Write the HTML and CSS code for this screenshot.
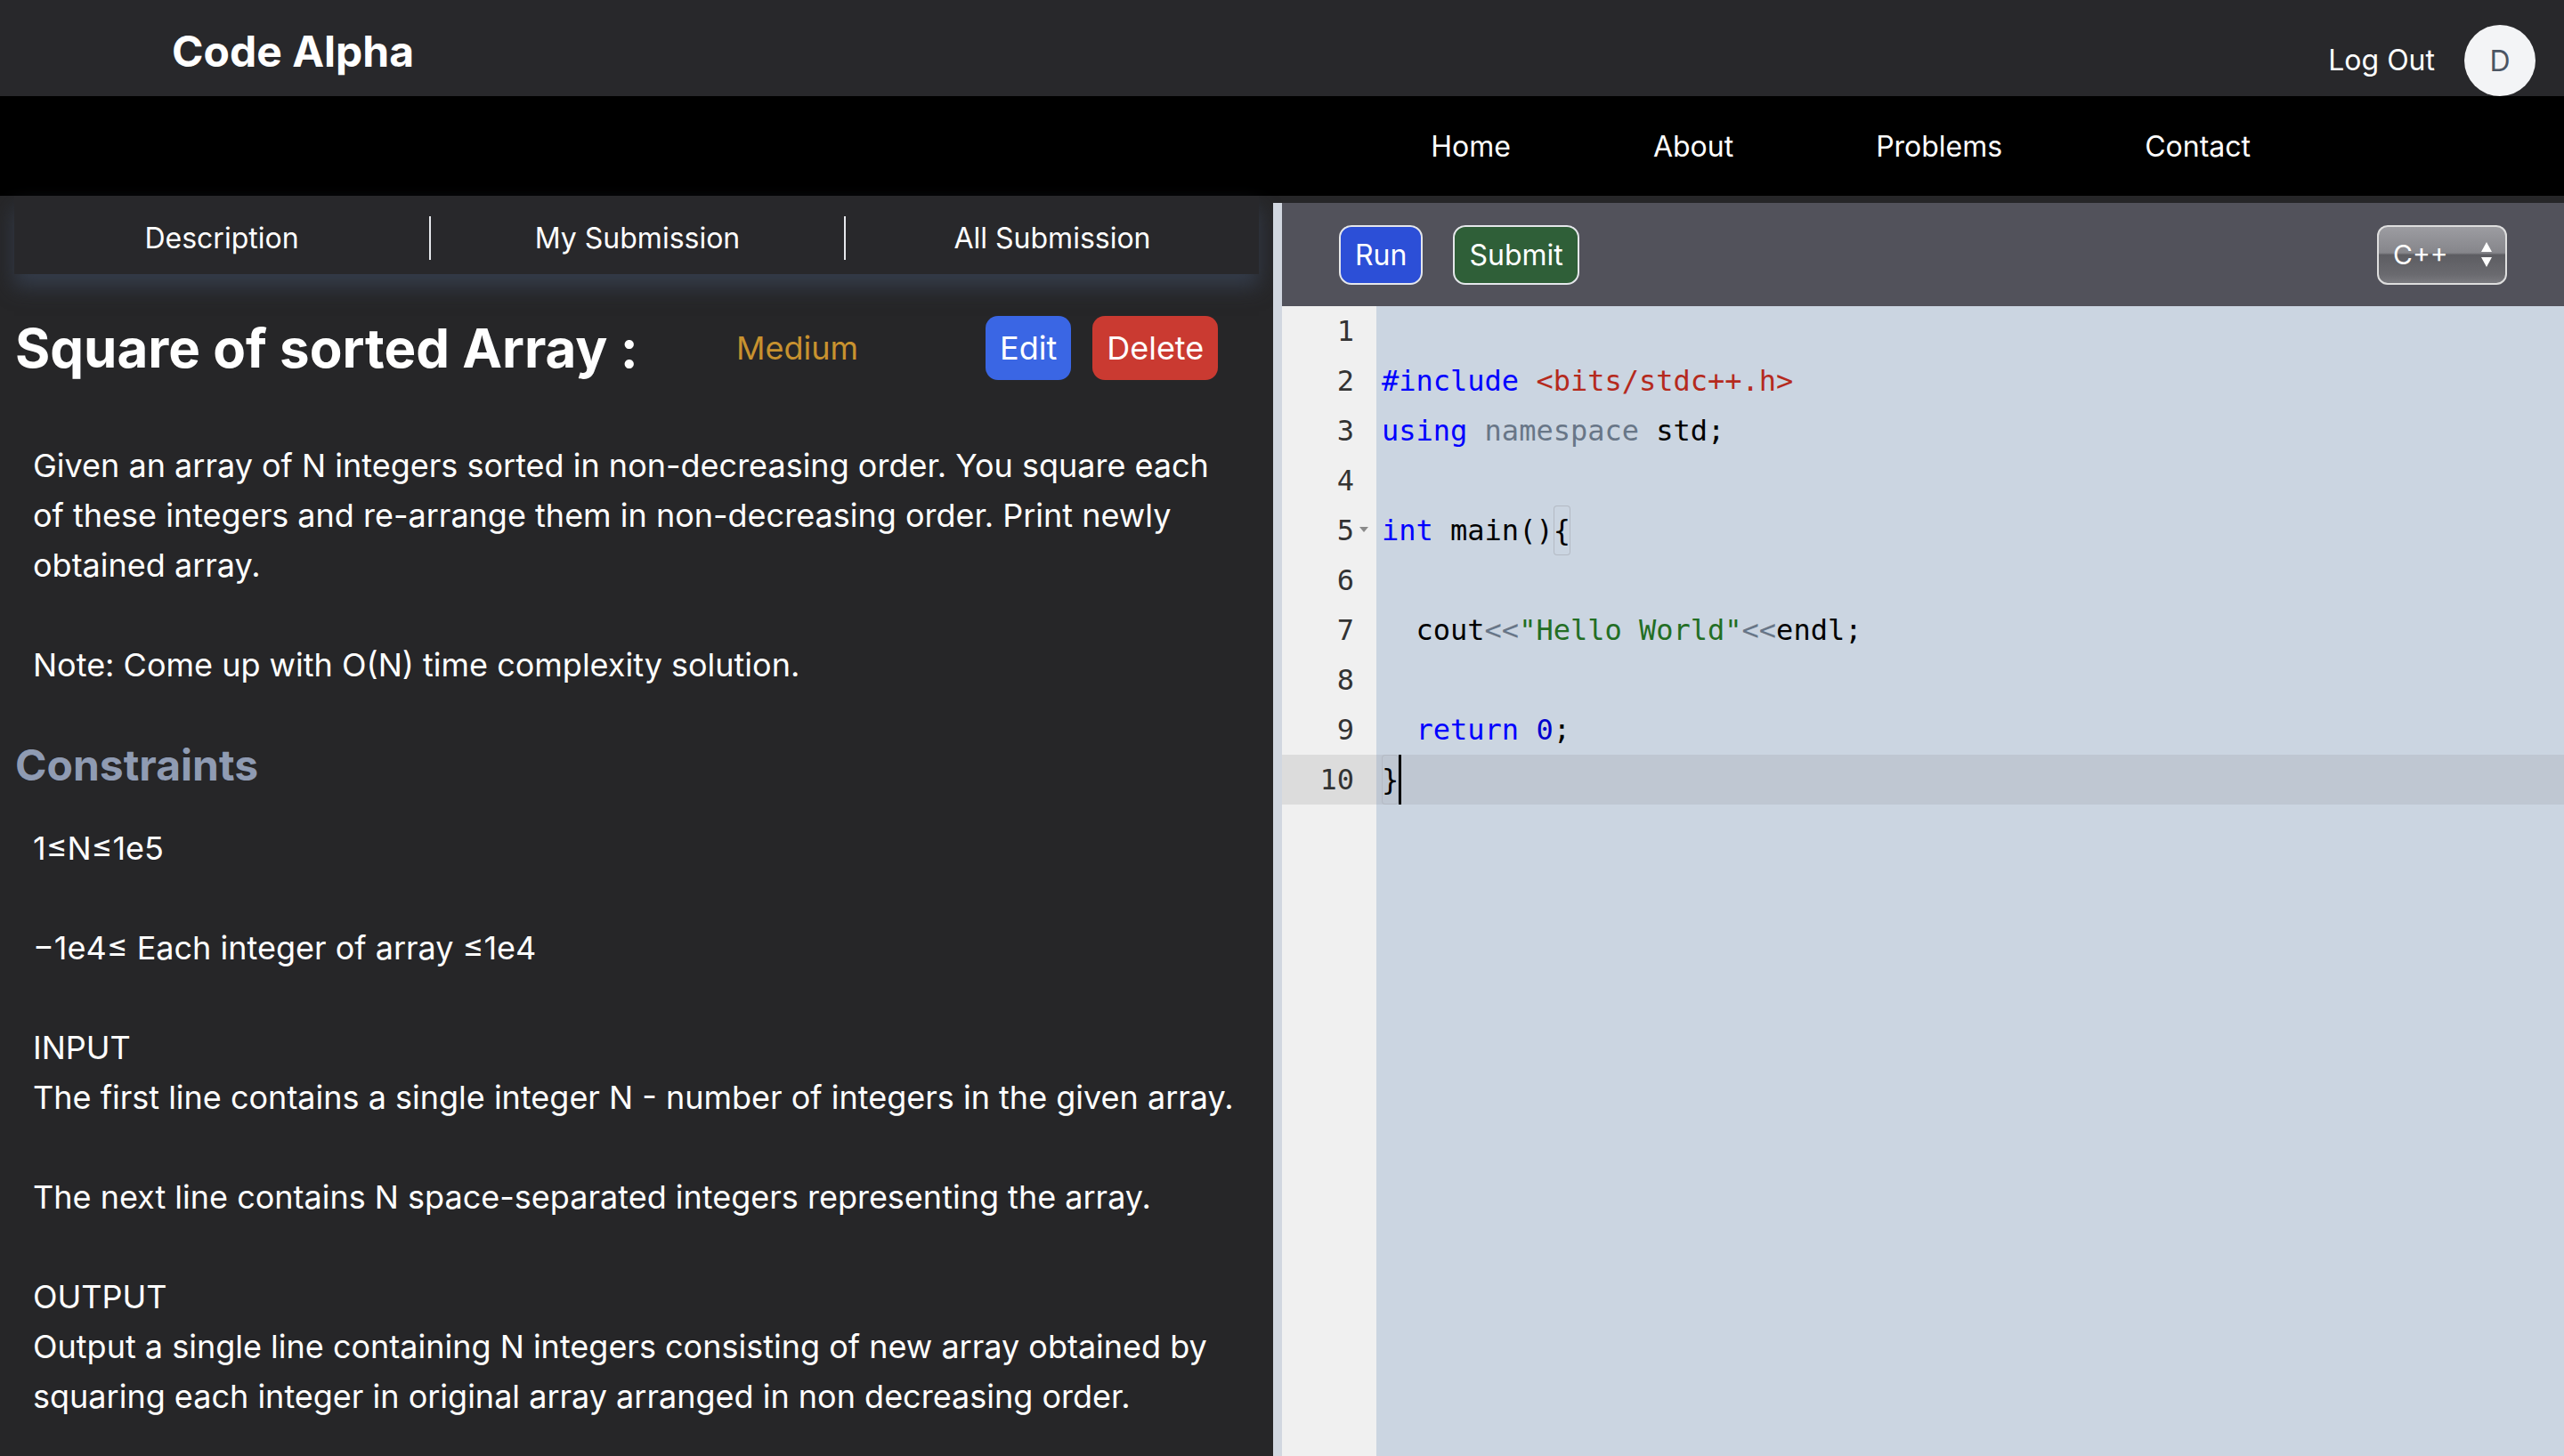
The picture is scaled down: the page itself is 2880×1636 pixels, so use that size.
FILE: index.html
```html
<!DOCTYPE html>
<html lang="en">
<head>
<meta charset="utf-8">
<title>Code Alpha</title>
<link rel="stylesheet" href="styles.css">
</head>
<body>
<div class="app">
  <header class="topbar">
    <div class="logo">Code Alpha</div>
    <div class="user">
      <span class="logout">Log Out</span>
      <span class="avatar">D</span>
    </div>
  </header>
  <nav class="navbar">
    <a href="#">Home</a>
    <a href="#">About</a>
    <a href="#">Problems</a>
    <a href="#">Contact</a>
  </nav>
  <main class="workspace">
    <section class="problem">
      <div class="tabs">
        <div class="tab">Description</div>
        <div class="tab">My Submission</div>
        <div class="tab">All Submission</div>
      </div>
      <div class="title-row">
        <h1 class="title">Square of sorted Array :</h1>
        <span class="level">Medium</span>
        <div class="actions">
          <button class="btn btn-edit">Edit</button>
          <button class="btn btn-delete">Delete</button>
        </div>
      </div>
      <div class="desc">
        <p>Given an array of N integers sorted in non-decreasing order. You square each of these integers and re-arrange them in non-decreasing order. Print newly obtained array.</p>
        <p class="tight">Note: Come up with O(N) time complexity solution.</p>
        <h2 class="sub">Constraints</h2>
        <p>1≤N≤1e5</p>
        <p>−1e4≤ Each integer of array ≤1e4</p>
        <p>INPUT<br>The first line contains a single integer N - number of integers in the given array.</p>
        <p>The next line contains N space-separated integers representing the array.</p>
        <p>OUTPUT<br>Output a single line containing N integers consisting of new array obtained by squaring each integer in original array arranged in non decreasing order.</p>
      </div>
    </section>
    <section class="editor-pane">
      <div class="toolbar">
        <button class="tbtn run">Run</button>
        <button class="tbtn submit">Submit</button>
        <div class="lang">
          <span>C++</span>
          <svg class="arrows" width="14" height="30" viewBox="0 0 14 30"><path d="M7 1 L13 12 L1 12 Z" fill="#fff"/><path d="M1 18 L13 18 L7 29 Z" fill="#fff"/></svg>
        </div>
      </div>
      <div class="editor">
        <div class="gutter">
          <div>1</div>
          <div>2</div>
          <div>3</div>
          <div>4</div>
          <div class="fold">5</div>
          <div>6</div>
          <div>7</div>
          <div>8</div>
          <div>9</div>
          <div class="active">10</div>
        </div>
        <div class="code">
          <div class="line"></div>
          <div class="line"><span class="kw">#include</span> <span class="inc">&lt;bits/stdc++.h&gt;</span></div>
          <div class="line"><span class="kw">using</span> <span class="ns">namespace</span> std;</div>
          <div class="line"></div>
          <div class="line"><span class="kw">int</span> main()<span class="brace">{</span></div>
          <div class="line"></div>
          <div class="line">  cout<span class="op">&lt;&lt;</span><span class="str">"Hello World"</span><span class="op">&lt;&lt;</span>endl;</div>
          <div class="line"></div>
          <div class="line">  <span class="kw">return</span> <span class="num">0</span>;</div>
          <div class="line active"><span class="brace">}</span><span class="cursor"></span></div>
        </div>
      </div>
    </section>
  </main>
</div>
</body>
</html>
```
FILE: styles.css
```css
* { box-sizing: border-box; }
html, body { margin: 0; height: 100%; }
body {
  background: #262628;
  font-family: Inter, "Noto Sans", sans-serif;
  color: #fff;
  overflow: hidden;
}
.app { height: 1636px; display: flex; flex-direction: column; }

.topbar {
  height: 108px;
  flex: none;
  background: #28282b;
  display: flex;
  justify-content: space-between;
  align-items: flex-start;
  padding: 0 32px 0 193px;
}
.logo { font-size: 48px; font-weight: 700; line-height: 48px; margin-top: 34px; }
.user { display: flex; align-items: center; gap: 33px; margin-top: 28px; }
.logout { font-size: 32px; line-height: 80px; }
.avatar {
  width: 80px; height: 80px; border-radius: 50%;
  background: #f3f4f6; color: #4b5563;
  font-size: 32px;
  display: flex; align-items: center; justify-content: center;
}

.navbar {
  height: 112px; flex: none;
  background: #000;
  display: flex; justify-content: flex-end; align-items: center;
  gap: 160px; padding-right: 352px;
}
.navbar a { color: #fff; font-size: 32px; text-decoration: none; }

.workspace { flex: 1; display: flex; min-height: 0; }

.problem { width: 1430px; flex: none; }
.tabs {
  margin-left: 16px; width: 1398px; height: 88px;
  background: #28282b;
  display: grid; grid-template-columns: repeat(3, 1fr);
  align-items: center; padding-top: 6px;
  box-shadow: 0 14px 22px rgba(55, 65, 81, 0.85);
}
.tab { text-align: center; font-size: 32px; height: 49px; line-height: 49px; }
.tab + .tab { border-left: 2px solid #e5e7eb; }

.title-row {
  display: flex; align-items: center;
  margin-top: 47px; padding-left: 17px; height: 72px;
}
.title { margin: 0; font-size: 60px; font-weight: 700; line-height: 72px; width: 810px; flex: none; }
.level { color: #c8922f; font-size: 36px; width: 280px; flex: none; }
.actions { display: flex; gap: 24px; }
.btn {
  height: 72px; border: none; border-radius: 14px;
  font-family: inherit; font-size: 36px; color: #fff;
  padding: 0 16px;
}
.btn-edit { background: #3a66e4; }
.btn-delete { background: #ca3a31; }

.desc {
  margin-top: 68px;
  padding: 0 33px 0 17px;
  font-size: 36px; line-height: 56px;
}
.desc p { margin: 0 0 56px; padding-left: 20px; }
.desc p.tight { margin-bottom: 0; }
.desc .sub {
  margin: 53px 0 33px; font-size: 48px; line-height: 64px;
  font-weight: 700; color: #8f9bb3;
}

.editor-pane {
  flex: 1; margin-top: 8px;
  border-left: 10px solid #d1d7e0;
  display: flex; flex-direction: column;
  background: #cbd5e1;
}
.toolbar {
  height: 116px; flex: none;
  background: #52525b;
  display: flex; align-items: center; gap: 34px;
  padding: 0 64px;
}
.tbtn {
  height: 67px; border: 2px solid #e5e7eb; border-radius: 14px;
  font-family: inherit; font-size: 32px; color: #fff;
  padding: 0 16px;
}
.run { background: #2c4fd7; }
.submit { background: #2f5f38; }
.lang {
  margin-left: auto;
  width: 146px; height: 67px;
  border: 2px solid #dedede; border-radius: 12px;
  background: linear-gradient(#9c9ca1 0%, #86868b 46%, #5d5d62 50%, #6a6a6f 85%, #7a7a7f 100%);
  display: flex; align-items: center; justify-content: space-between;
  padding: 0 14px 0 16px;
  font-size: 30px; color: #fff;
}

.editor {
  flex: 1; display: flex;
  font-family: "DejaVu Sans Mono", "Liberation Mono", monospace;
  font-size: 32px; line-height: 56px;
}
.gutter { width: 106px; flex: none; background: #f0f0f0; color: #333; text-align: right; }
.gutter div { height: 56px; padding-right: 25px; position: relative; }
.gutter .active { background: #dcdcdc; }
.gutter .fold::after {
  content: ""; position: absolute; right: 9px; top: 24px;
  border-left: 5px solid transparent; border-right: 5px solid transparent;
  border-top: 6px solid #8a8a8a;
}
.code { flex: 1; }
.line { height: 56px; padding-left: 6px; white-space: pre; color: #000; }
.line.active { background: #bfc7d2; }
.kw { color: #0000ff; }
.inc { color: #b52a1d; }
.ns { color: #687687; }
.op { color: #687687; }
.str { color: #236e24; }
.num { color: #0000cd; }
.brace { display: inline-block; height: 56px; box-shadow: inset 0 0 0 1px #b4bac4; border-radius: 4px; }
.cursor { display: inline-block; width: 3px; height: 56px; background: #000; vertical-align: top; }
```
